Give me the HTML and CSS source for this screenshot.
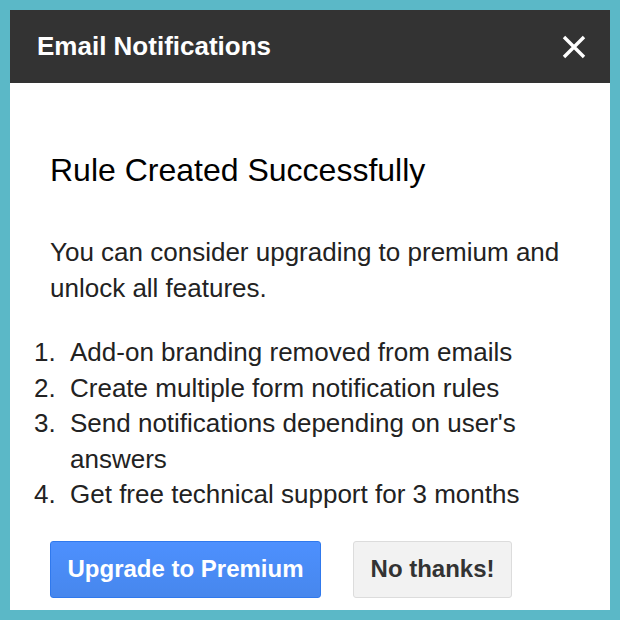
FILE: index.html
```html
<!DOCTYPE html>
<html lang="en">
<head>
  <meta charset="UTF-8" />
  <title>Email Notifications</title>
  <link rel="stylesheet" href="styles.css">
</head>
<body>
  <div class="dialog">
    <div class="dialog-header">
      <h2>Email Notifications</h2>
      <button class="close" aria-label="Close">
        <svg width="24" height="24" viewBox="0 0 24 24">
          <path d="M2 2 L22 22 M22 2 L2 22" stroke="#fff" stroke-width="3.4" fill="none" />
        </svg>
      </button>
    </div>

    <div class="dialog-body">
      <h1>Rule Created Successfully</h1>
      <p>You can consider upgrading to premium and unlock all features.</p>

      <ol class="features">
        <li><span class="num">1.</span><span>Add-on branding removed from emails</span></li>
        <li><span class="num">2.</span><span>Create multiple form notification rules</span></li>
        <li><span class="num">3.</span><span>Send notifications depending on user's answers</span></li>
        <li><span class="num">4.</span><span>Get free technical support for 3 months</span></li>
      </ol>

      <div class="actions">
        <button class="btn btn-primary">Upgrade to Premium</button>
        <button class="btn btn-default">No thanks!</button>
      </div>
    </div>
  </div>
</body>
</html>
```

FILE: styles.css
```css
* { box-sizing: border-box; }
body {
  margin: 0;
  background: #5bb8c7;
  font-family: 'Liberation Sans', Arial, sans-serif;
}
.dialog {
  width: 600px;
  height: 600px;
  margin: 10px;
  background: white;
}
.dialog-header {
  height: 73px;
  background: #333333;
  display: flex;
  align-items: center;
  justify-content: space-between;
  padding: 0 24px 0 27px;
}
.dialog-header h2 {
  margin: 0;
  color: white;
  font-size: 26px;
  font-weight: bold;
}
.close {
  background: none;
  border: none;
  padding: 0;
  width: 24px;
  height: 24px;
  cursor: pointer;
  display: block;
}
.close svg { display: block; }
.dialog-body {
  padding: 69px 40px 0 40px;
  color: #222;
}
h1 {
  margin: 0;
  font-size: 32px;
  font-weight: normal;
  line-height: 36px;
  color: #000;
}
p {
  margin: 47px 0 0;
  font-size: 26px;
  line-height: 35.5px;
}
.features {
  list-style: none;
  margin: 29px 0 0 -16px;
  padding: 0;
  font-size: 26px;
  line-height: 35.5px;
}
.features li {
  display: flex;
}
.features .num {
  flex: 0 0 36px;
}
.actions {
  display: flex;
  gap: 32px;
  margin-top: 28px;
}
.btn {
  height: 57px;
  padding: 0 16.5px;
  font-family: 'Liberation Sans', Arial, sans-serif;
  font-size: 24px;
  font-weight: bold;
  border-radius: 3px;
  cursor: pointer;
}
.btn-primary {
  color: white;
  background: linear-gradient(#4d90fe, #4787ed);
  border: 1px solid #3079ed;
}
.btn-default {
  color: #333;
  background: #f2f2f2;
  border: 1px solid #dcdcdc;
}
```
